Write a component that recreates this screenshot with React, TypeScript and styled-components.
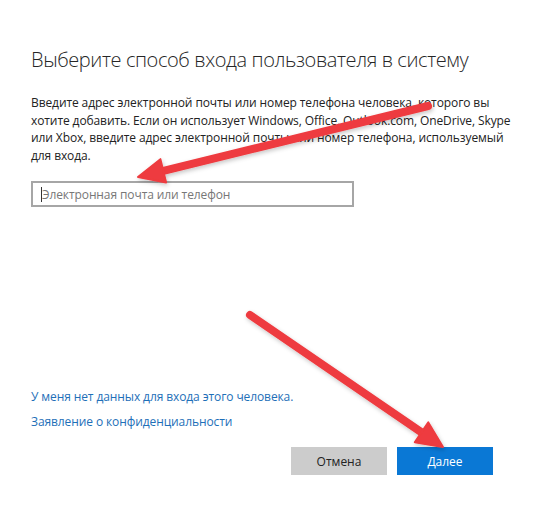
import styled, { createGlobalStyle } from "styled-components";

const GlobalStyle = createGlobalStyle`
  html, body {
    margin: 0;
    padding: 0;
    background: #ffffff;
  }
  * {
    box-sizing: border-box;
  }
`;

const Page = styled.div`
  position: relative;
  width: 550px;
  height: 506px;
  padding: 45px 57px 31px 31px;
  display: flex;
  flex-direction: column;
  font-family: "Open Sans", "Noto Sans", sans-serif;
  color: #222;
  overflow: hidden;
`;

const Title = styled.h1`
  margin: 0;
  font-size: 20px;
  font-weight: 300;
  letter-spacing: -0.4px;
  line-height: 30px;
  color: #262626;
  white-space: nowrap;
`;

const Intro = styled.p`
  margin: 19px 0 0;
  font-size: 12px;
  letter-spacing: -0.1px;
  line-height: 17.5px;
  color: #222;
  white-space: nowrap;
`;

const Field = styled.div`
  margin-top: 17px;
  width: 323px;
  height: 26px;
  border: 2px solid #a6a6a6;
  display: flex;
  align-items: center;
  padding-left: 8px;
`;

const Caret = styled.span`
  width: 1px;
  height: 15px;
  background: #333;
`;

const Placeholder = styled.span`
  font-size: 12px;
  letter-spacing: -0.1px;
  color: #777;
`;

const Spacer = styled.div`
  flex: 1;
`;

const Links = styled.div`
  display: flex;
  flex-direction: column;
  gap: 8px;
`;

const Link = styled.a`
  font-size: 12px;
  letter-spacing: -0.1px;
  line-height: 17px;
  color: #1e6fb8;
  text-decoration: none;
`;

const Actions = styled.div`
  margin-top: 17px;
  display: flex;
  justify-content: flex-end;
  gap: 10px;
`;

const Button = styled.button<{ $primary?: boolean }>`
  width: 96px;
  height: 28px;
  border: none;
  font-family: inherit;
  font-size: 12px;
  color: ${(p) => (p.$primary ? "#ffffff" : "#222")};
  background: ${(p) => (p.$primary ? "#0a78d5" : "#cccccc")};
`;

const Overlay = styled.svg`
  position: absolute;
  inset: 0;
  pointer-events: none;
`;

const Arrow = ({ x1, y1, x2, y2 }: { x1: number; y1: number; x2: number; y2: number }) => {
  const dx = x2 - x1;
  const dy = y2 - y1;
  const len = Math.hypot(dx, dy);
  const ux = dx / len;
  const uy = dy / len;
  const headLen = 26;
  const headHalf = 12;
  const bx = x2 - ux * headLen;
  const by = y2 - uy * headLen;
  const px = -uy;
  const py = ux;
  const head = `${x2},${y2} ${bx + px * headHalf},${by + py * headHalf} ${bx - px * headHalf},${by - py * headHalf}`;
  return (
    <g>
      <line
        x1={x1}
        y1={y1}
        x2={bx + ux * 4}
        y2={by + uy * 4}
        stroke="#ee3b3f"
        strokeWidth={8}
        strokeLinecap="round"
      />
      <polygon points={head} fill="#ee3b3f" stroke="#ee3b3f" strokeWidth={2} strokeLinejoin="round" />
    </g>
  );
};

export default function App() {
  return (
    <>
      <GlobalStyle />
      <Page>
        <Title>Выберите способ входа пользователя в систему</Title>
        <Intro>
          Введите адрес электронной почты или номер телефона человека, которого вы
          <br />
          хотите добавить. Если он использует Windows, Office, Outlook.com, OneDrive, Skype
          <br />
          или Xbox, введите адрес электронной почты или номер телефона, используемый
          <br />
          для входа.
        </Intro>
        <Field>
          <Caret />
          <Placeholder>Электронная почта или телефон</Placeholder>
        </Field>
        <Spacer />
        <Links>
          <Link href="#">У меня нет данных для входа этого человека.</Link>
          <Link href="#">Заявление о конфиденциальности</Link>
        </Links>
        <Actions>
          <Button>Отмена</Button>
          <Button $primary>Далее</Button>
        </Actions>
        <Overlay width={550} height={506} viewBox="0 0 550 506">
          <defs>
            <filter id="shadow" x="-10%" y="-10%" width="120%" height="120%">
              <feDropShadow dx="1" dy="2" stdDeviation="2" floodColor="#000" floodOpacity="0.22" />
            </filter>
          </defs>
          <g filter="url(#shadow)">
            <Arrow x1={428} y1={106} x2={138} y2={177} />
            <Arrow x1={250} y1={315} x2={443} y2={447} />
          </g>
        </Overlay>
      </Page>
    </>
  );
}
